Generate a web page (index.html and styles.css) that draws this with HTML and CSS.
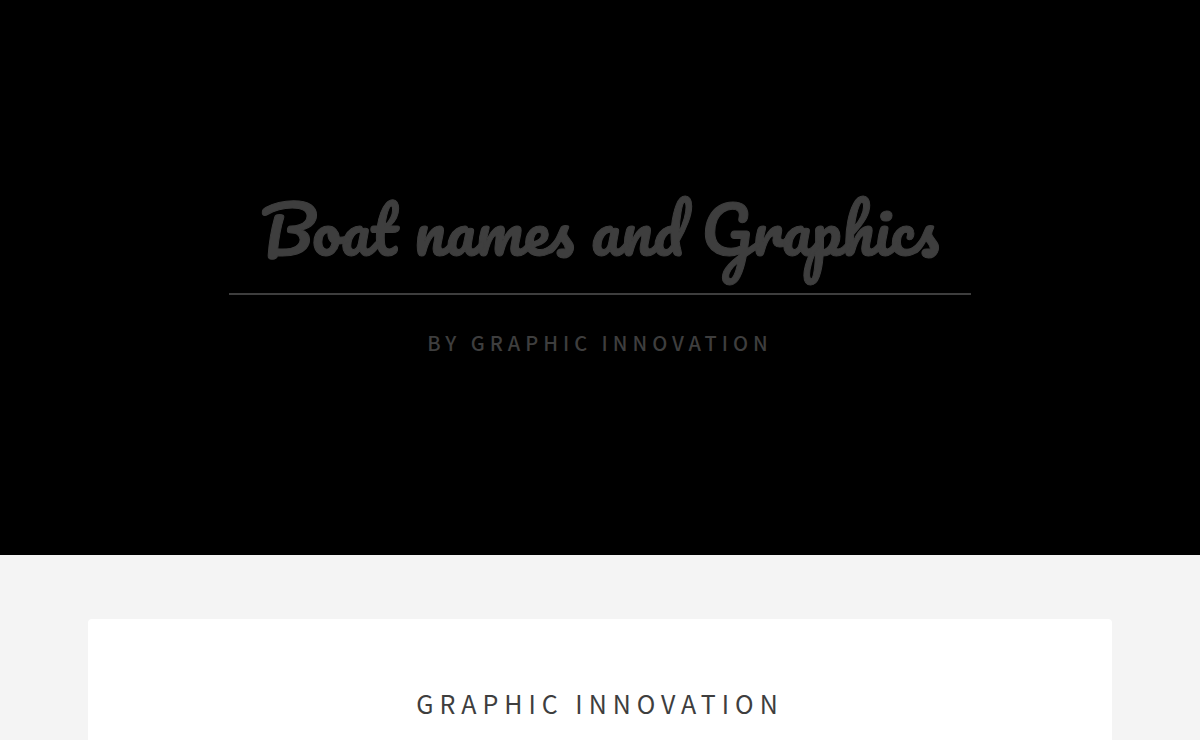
FILE: index.html
```html
<!DOCTYPE html>
<html lang="en">

<head>
  <meta charset="UTF-8">
  <meta name="viewport" content="width=device-width, initial-scale=1">
  <title>Boat names and Graphics</title>
  <link rel="stylesheet" href="styles.css">
</head>

<body>
  <header class="banner">
    <h1>Boat names and Graphics</h1>
    <p>By Graphic Innovation</p>
  </header>
  <main class="wrapper">
    <section class="box">
      <h2>Graphic Innovation</h2>
    </section>
  </main>
</body>

</html>
```
FILE: styles.css
```css
* {
  box-sizing: border-box;
}

body {
  margin: 0;
  background: #f4f4f4;
  color: #3e3e3e;
  font-family: "Noto Sans CJK SC", "Noto Sans", sans-serif;
}

.banner {
  display: flex;
  flex-direction: column;
  align-items: center;
  justify-content: center;
  height: 75vh;
  background: #000;
  text-align: center;
}

.banner h1 {
  margin: 0 0 30px;
  padding: 0 32px 30px;
  border-bottom: 2px solid #3e3e3e;
  font-family: Pacifico, cursive;
  font-size: 64px;
  font-weight: 400;
  line-height: 68px;
  -webkit-text-stroke: 1px #3e3e3e;
}

.banner p {
  margin: 0;
  font-size: 20px;
  font-weight: 500;
  letter-spacing: 5px;
  line-height: 36px;
  text-transform: uppercase;
}

.wrapper {
  padding: 64px 32px;
}

.box {
  max-width: 1024px;
  margin: 0 auto;
  padding: 64px;
  border-radius: 4px;
  background: #fff;
}

.box h2 {
  margin: 0;
  font-size: 25px;
  font-weight: 400;
  letter-spacing: 6px;
  line-height: 40px;
  text-align: center;
  text-transform: uppercase;
}
```
